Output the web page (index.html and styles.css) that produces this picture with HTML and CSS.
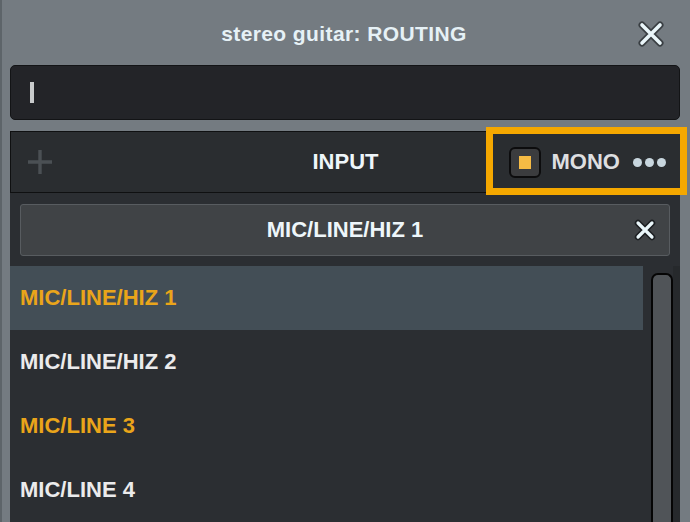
FILE: index.html
```html
<!DOCTYPE html>
<html lang="en">
<head>
    <meta charset="UTF-8">
    <meta name="viewport" content="width=device-width, initial-scale=1.0">
    <title>stereo guitar: ROUTING</title>

    <link rel="stylesheet" href="styles.css">
</head>
<body>
    <div class="window">
        <!-- titulo -->
        <div class="titlebar">
            <span></span>
            <h1 class="title">stereo guitar: ROUTING</h1>
            <button class="closeBtn" aria-label="close">
                <svg width="26" height="26" viewBox="0 0 26 26">
                    <path d="M4 4 L22 22 M22 4 L4 22" stroke="#3a3f43" stroke-width="7" stroke-linecap="round"/>
                    <path d="M4 4 L22 22 M22 4 L4 22" stroke="#eaf6fa" stroke-width="3.6" stroke-linecap="round"/>
                </svg>
            </button>
        </div>

        <div class="search">
            <span class="caret"></span>
        </div>

        <!-- panel -->
        <div class="panel">
            <div class="panelHead">
                <div class="plus">
                    <svg width="24" height="24" viewBox="0 0 24 24">
                        <path d="M12 0 V24 M0 12 H24" stroke="#4b5054" stroke-width="3.4"/>
                    </svg>
                </div>
                <div class="headTitle">INPUT</div>
                <div class="monoGroup">
                    <span class="check"><span class="checkMark"></span></span>
                    <span class="monoLabel">MONO</span>
                    <span class="dots"><i></i><i></i><i></i></span>
                </div>
            </div>
            <div class="highlight"></div>

            <div class="current">
                <span></span>
                <span class="currentName">MIC/LINE/HIZ 1</span>
                <button class="clearBtn" aria-label="clear">
                    <svg width="22" height="22" viewBox="0 0 22 22">
                        <path d="M4 4 L18 18 M18 4 L4 18" stroke="#1c1f22" stroke-width="6.4" stroke-linecap="round"/>
                        <path d="M4 4 L18 18 M18 4 L4 18" stroke="#eaf6fa" stroke-width="3.2" stroke-linecap="round"/>
                    </svg>
                </button>
            </div>

            <div class="listWrap">
                <ul class="inputList">
                    <li class="active orange">MIC/LINE/HIZ 1</li>
                    <li>MIC/LINE/HIZ 2</li>
                    <li class="orange">MIC/LINE 3</li>
                    <li>MIC/LINE 4</li>
                </ul>
                <div class="scrollTrack">
                    <div class="scrollThumb"></div>
                </div>
            </div>
        </div>
    </div>
</body>
</html>
```

FILE: styles.css
```css
* {
    box-sizing: border-box;
}

body {
    margin: 0;
    font-family: "Liberation Sans", Arial, Helvetica, sans-serif;
    background-color: #747b81;
}

.window {
    position: relative;
    width: 690px;
    height: 522px;
    overflow: hidden;
    background-color: #747b81;
    border-left: 2px solid #5d6469;
    display: flex;
    flex-direction: column;
}

.titlebar {
    height: 66px;
    display: grid;
    grid-template-columns: 1fr auto 1fr;
    align-items: center;
    padding-top: 3px;
}

.title {
    margin: 0;
    font-size: 21px;
    font-weight: bold;
    color: #e6f1f6;
    letter-spacing: 0.4px;
    transform: translateX(-2px);
}

.closeBtn {
    justify-self: end;
    margin-right: 26px;
    padding: 0;
    border: none;
    background: none;
    display: flex;
    cursor: pointer;
}

.search {
    height: 55px;
    margin: 0 10px 0 8px;
    background-color: #232428;
    border: 1px solid #131416;
    border-radius: 5px;
    display: flex;
    align-items: center;
    padding-left: 19px;
}

.caret {
    width: 4px;
    height: 21px;
    background-color: #c9cbcc;
}

.panel {
    position: relative;
    flex: 1;
    margin: 11px 10px 0 8px;
    background-color: #2b2e32;
    display: flex;
    flex-direction: column;
}

.panelHead {
    height: 62px;
    display: grid;
    grid-template-columns: 1fr auto 1fr;
    align-items: center;
    background-color: #2a2d30;
    border: 1px solid #0f1011;
    border-right: none;
}

.plus {
    display: flex;
    padding-left: 17px;
}

.headTitle {
    font-size: 22px;
    font-weight: bold;
    color: #eef6fa;
}

.monoGroup {
    justify-self: end;
    display: flex;
    align-items: center;
    padding-right: 14px;
}

.check {
    width: 32px;
    height: 31px;
    background-color: #3b3c3e;
    border: 2px solid #0c0c0d;
    border-radius: 6px;
    display: flex;
    align-items: center;
    justify-content: center;
}

.checkMark {
    width: 12px;
    height: 13px;
    background-color: #f6bb44;
}

.monoLabel {
    margin-left: 11px;
    font-size: 22px;
    font-weight: bold;
    color: #dedfe0;
}

.dots {
    display: flex;
    gap: 3px;
    margin-left: 13px;
}

.dots i {
    width: 9px;
    height: 9px;
    border-radius: 50%;
    background-color: #c8d6de;
}

/* recuadro naranja de resaltado */
.highlight {
    position: absolute;
    left: 476px;
    top: -4px;
    width: 201px;
    height: 68px;
    border: 7px solid #f5a800;
}

.current {
    height: 52px;
    margin: 11px 10px 10px 10px;
    background-color: #404346;
    border: 1px solid #585c60;
    border-radius: 3px;
    display: grid;
    grid-template-columns: 1fr auto 1fr;
    align-items: center;
}

.currentName {
    font-size: 22px;
    font-weight: bold;
    color: #eef6fa;
}

.clearBtn {
    justify-self: end;
    margin-right: 13px;
    padding: 0;
    border: none;
    background: none;
    display: flex;
}

.listWrap {
    flex: 1;
    display: flex;
}

.inputList {
    list-style: none;
    margin: 0;
    padding: 0;
    width: 633px;
}

.inputList li {
    height: 64px;
    display: flex;
    align-items: center;
    padding-left: 10px;
    font-size: 22px;
    font-weight: bold;
    color: #ebebec;
}

.inputList li.active {
    background-color: #434e56;
}

.inputList li.orange {
    color: #eaa51a;
}

.scrollTrack {
    flex: 1;
    display: flex;
    padding: 7px 7px 0 8px;
    background: linear-gradient(to right, #2b2e32 0 30px, #26292c 30px);
}

.scrollThumb {
    width: 22px;
    background-color: #505458;
    border: 2px solid #050505;
    border-bottom: none;
    border-radius: 7px 7px 0 0;
}
```
